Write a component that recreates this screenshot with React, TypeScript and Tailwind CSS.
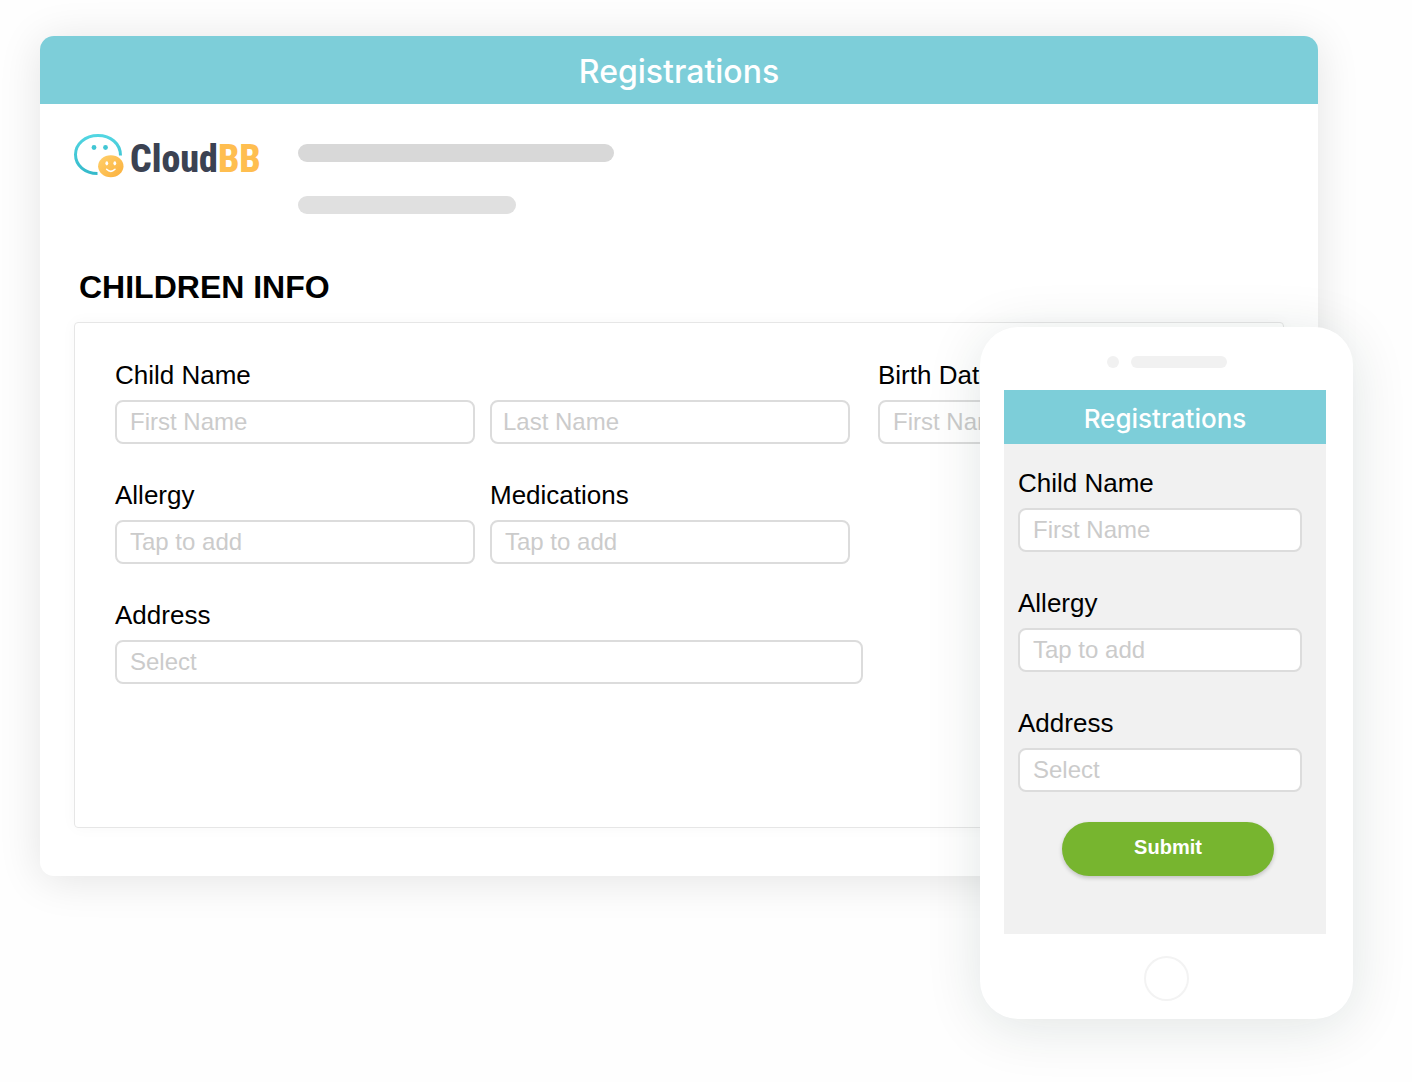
import React, { useId } from 'react'

const inputClass =
  'block h-11 w-full appearance-none rounded-lg border-2 border-[#dcdcdc] bg-white px-[13px] text-2xl text-black outline-none placeholder:text-[#cbcbcb] placeholder:opacity-100'

export default function App() {
  return (
    <div className="relative min-h-screen bg-[#fefefe] pt-9 pr-[94px] pb-[206px] pl-10 font-['Liberation_Sans',Arial,sans-serif] text-black">
      <main className="overflow-clip rounded-[14px] bg-white shadow-[0_4px_44px_rgba(0,0,0,0.11)]">
        <h1 className="bg-[#7dced9] pt-1 text-center font-[Inter,sans-serif] text-[32px] leading-[64px] font-medium text-white">
          Registrations
        </h1>
        <div className="px-[34px] pt-7 pb-12">
          <div className="flex">
            <Logo />
            <div className="ml-10 flex flex-col gap-[34px] pt-3">
              <div className="h-[18px] w-[316px] rounded-full bg-[#d8d8d8]" />
              <div className="h-[18px] w-[218px] rounded-full bg-[#e0e0e0]" />
            </div>
          </div>
          <h2 className="mt-[55px] ml-[5px] text-[32px] leading-9 font-bold">CHILDREN INFO</h2>
          <ChildrenForm />
        </div>
      </main>
      <Phone />
    </div>
  )
}

function ChildrenForm() {
  return (
    <form className="mt-[17px] rounded border border-[#e6e6e6] px-10 pt-[35px] pb-[143px] shadow-[0_0_16px_rgba(0,0,0,0.03)]">
      <div className="grid grid-cols-[735fr_365fr] gap-x-7">
        <div className="grid grid-cols-2 items-end gap-x-[15px] gap-y-[34px]">
          <Field label="Child Name" placeholder="First Name" />
          <input type="text" aria-label="Last Name" placeholder="Last Name" className={`${inputClass} pl-[11px]`} />
          <Field label="Allergy" placeholder="Tap to add" />
          <Field label="Medications" placeholder="Tap to add" />
        </div>
        <Field label="Birth Date" placeholder="First Name" />
      </div>
      <div className="mt-[34px] w-[748px] max-w-full">
        <AddressField />
      </div>
    </form>
  )
}

function Phone() {
  return (
    <aside className="absolute top-[327px] right-[59px] w-[373px] rounded-[38px] bg-white px-6 pt-[29px] pb-[18px] shadow-[0_8px_56px_rgba(20,50,40,0.12)]">
      <div className="flex items-center justify-center gap-3">
        <span className="size-3 rounded-full bg-[#f1f1f1]" />
        <span className="h-3 w-24 rounded-full bg-[#f1f1f1]" />
      </div>
      <div className="mt-[22px] mr-[3px] bg-[#f1f1f1]">
        <h2 className="bg-[#7dced9] pt-1 text-center font-[Inter,sans-serif] text-[26px] leading-[50px] font-medium text-white">
          Registrations
        </h2>
        <form className="flex flex-col gap-[34px] pt-[22px] pr-6 pb-[58px] pl-3.5">
          <Field label="Child Name" placeholder="First Name" />
          <Field label="Allergy" placeholder="Tap to add" />
          <div>
            <AddressField />
            <button
              type="button"
              className="mt-[30px] ml-11 block h-[54px] w-[212px] rounded-full bg-[#77b52f] pb-1 text-xl font-bold text-white shadow-[0_2px_4px_rgba(0,0,0,0.2)]"
            >
              Submit
            </button>
          </div>
        </form>
      </div>
      <button
        type="button"
        aria-label="Home"
        className="mx-auto mt-[22px] block size-[45px] rounded-full border-2 border-[#f3f3f3]"
      />
    </aside>
  )
}

function Field({ label, placeholder }: { label: string; placeholder: string }) {
  const id = useId()
  return (
    <div>
      <Label htmlFor={id}>{label}</Label>
      <input id={id} type="text" placeholder={placeholder} className={inputClass} />
    </div>
  )
}

function AddressField() {
  const id = useId()
  return (
    <div>
      <Label htmlFor={id}>Address</Label>
      <select id={id} defaultValue="" className={`${inputClass} invalid:text-[#cbcbcb]`} required>
        <option value="">Select</option>
      </select>
    </div>
  )
}

function Label({ htmlFor, children }: { htmlFor: string; children: React.ReactNode }) {
  return (
    <label htmlFor={htmlFor} className="mb-2 block text-[26px] leading-[34px]">
      {children}
    </label>
  )
}

function Logo() {
  return (
    <div className="flex h-12 w-[184px] items-center gap-1.5">
      <svg width="50" height="48" viewBox="74 132 50 48" fill="none" className="shrink-0" aria-hidden="true">
        <defs>
          <linearGradient id="cloud" x1="0" y1="0" x2="0" y2="1">
            <stop offset="0" stopColor="#52d6e2" />
            <stop offset="1" stopColor="#35bacb" />
          </linearGradient>
          <linearGradient id="baby" x1="0" y1="0" x2="1" y2="1">
            <stop offset="0" stopColor="#ffd06c" />
            <stop offset="1" stopColor="#fbb03c" />
          </linearGradient>
        </defs>
        <path
          d="M120.5 155.5C120.5 143.5 110.5 135.5 98 135.5C85 135.5 75.5 144 75.5 154.5C75.5 165.5 85 173.5 97.5 173.5"
          stroke="url(#cloud)"
          strokeWidth="3"
        />
        <circle cx="94" cy="147.5" r="2.4" fill="#41c6d4" />
        <circle cx="105.5" cy="147.5" r="2.4" fill="#41c6d4" />
        <ellipse cx="110.8" cy="166.3" rx="12.7" ry="11" fill="url(#baby)" />
        <ellipse cx="106.8" cy="163.3" rx="1.4" ry="2.1" fill="#fff" />
        <ellipse cx="114.8" cy="163.3" rx="1.4" ry="2.1" fill="#fff" />
        <path d="M106.6 169.3Q110.8 173.4 115 169.3" stroke="#fff" strokeWidth="1.5" strokeLinecap="round" />
      </svg>
      <span className="pt-1.5 font-['Liberation_Sans_Narrow','Roboto_Condensed','Liberation_Sans',sans-serif] text-[38px] leading-[48px] font-extrabold text-[#3b4252]">
        Cloud<span className="text-[#ffbe50]">BB</span>
      </span>
    </div>
  )
}
